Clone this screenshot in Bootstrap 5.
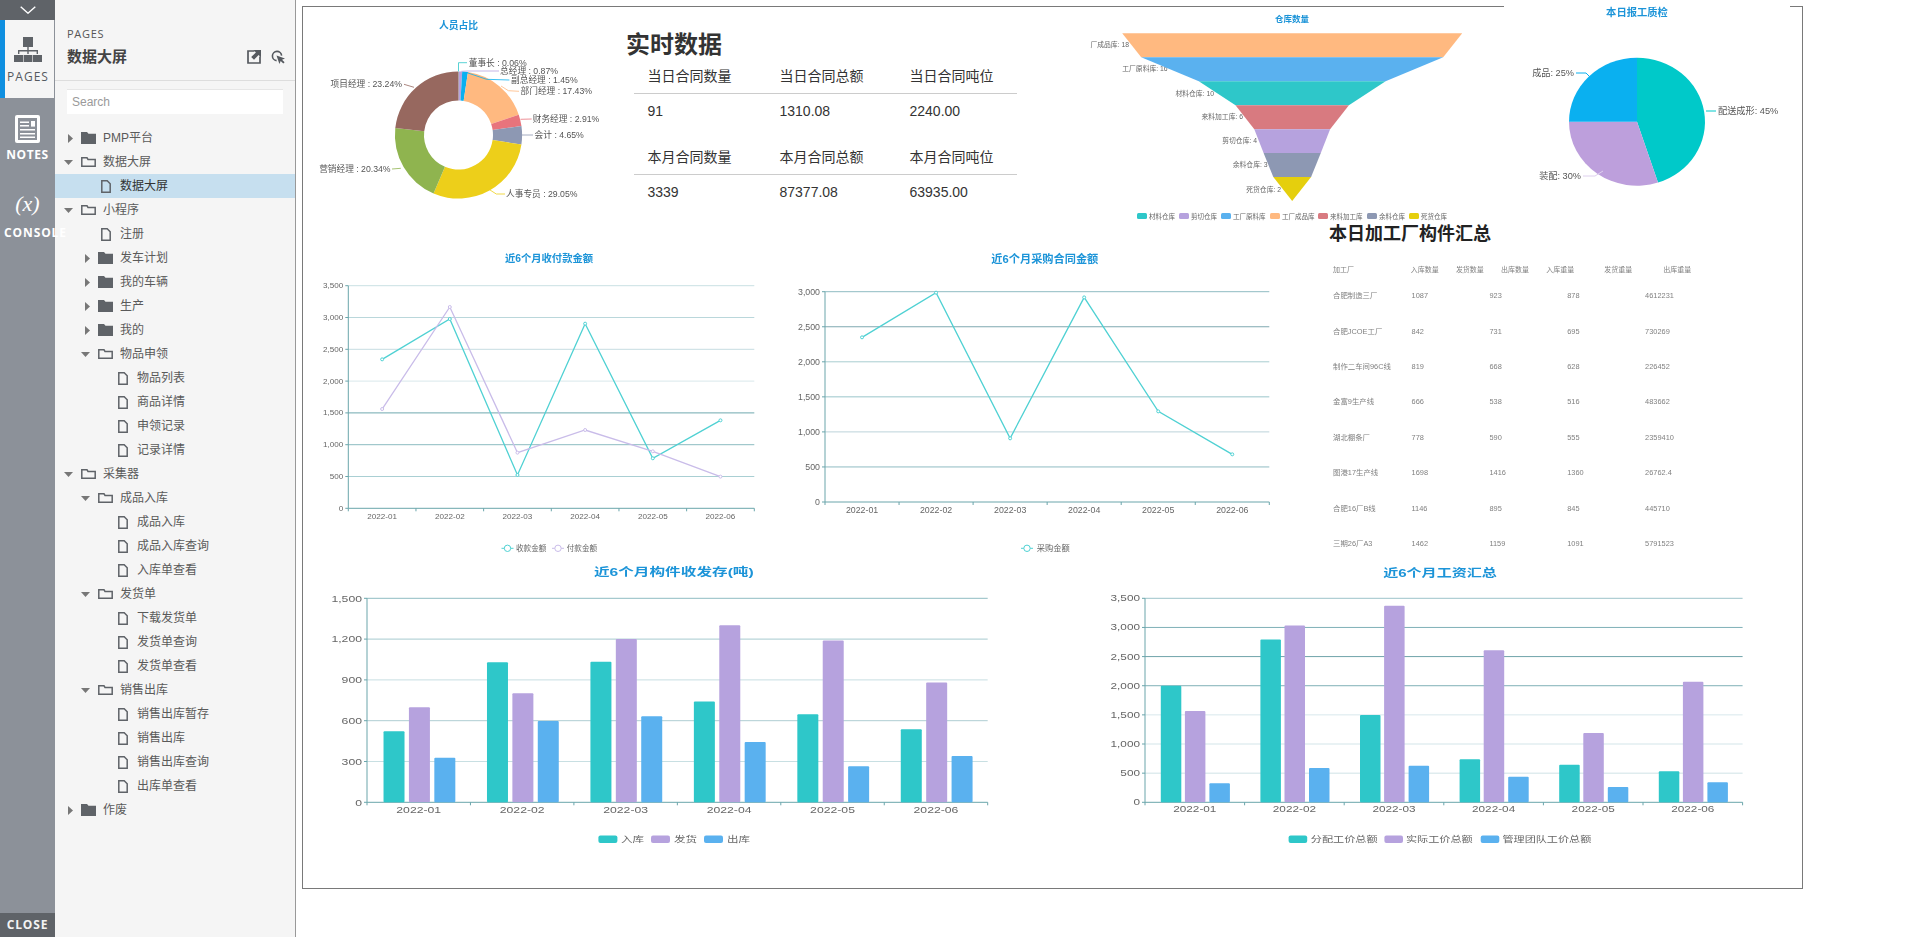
<!DOCTYPE html>
<html lang="en">
<head>
  <meta charset="UTF-8">
  <title>数据大屏</title>
  <meta name="viewport" content="width=device-width, initial-scale=1">
  <link href="https://cdn.jsdelivr.net/npm/bootstrap@5.3.0/dist/css/bootstrap.min.css" rel="stylesheet">
  <style>
    html, body { height: 100%; }
    body {
      background: #fff;
      overflow: hidden;
      font-family: "Liberation Sans", "Noto Sans CJK SC", sans-serif;
      color: #333;
    }
    svg { display: block; flex-shrink: 0; }

    /* left rail */
    .rail { width: 55px; height: 937px; background: #8c9199; flex-shrink: 0; position: relative; z-index: 2; }
    .rail-top { height: 20px; background: #5f6368; }
    .rail-tab { color: #fff; font-family: "Open Sans", sans-serif; font-weight: 700; font-size: 12px; letter-spacing: .6px; line-height: 16px; white-space: nowrap; text-align: center; }
    .tab-pages { height: 78px; padding-top: 17px; background: #f5f5f5; border-left: 5px solid #0f8fe0; border-right: 1px solid #8c9199; color: #55595f; font-weight: 400; letter-spacing: 1px; }
    .tab-pages svg { margin: 0 0 7px 9px; }
    .tab-pages div { margin-left: -3px; }
    .tab-notes { height: 78px; padding-top: 17px; }
    .tab-notes svg { margin: 0 auto 4px; }
    .tab-console { padding-top: 12px; }
    .tab-console .fx { font-family: "Liberation Serif", serif; font-style: italic; font-size: 22px; line-height: 32px; font-weight: 400; margin-bottom: 5px; letter-spacing: 0; }
    .tab-console .lbl { text-align: left; margin-left: 4px; letter-spacing: .9px; }
    .rail-close { height: 24px; line-height: 24px; background: #5f6368; color: #f3f3f3; font-family: "Open Sans", sans-serif; font-weight: 700; font-size: 12px; letter-spacing: .8px; }

    /* pages pane */
    .pane { width: 241px; height: 937px; background: #f5f5f5; border-right: 1px solid #999; flex-shrink: 0; }
    .pane-head { height: 81px; padding: 26px 10px 0 12px; border-bottom: 1px solid #ddd; }
    .pane-label { font-family: "Open Sans", sans-serif; font-size: 11px; line-height: 16px; letter-spacing: .7px; color: #555; }
    .pane-title { font-size: 15px; line-height: 20px; margin-top: 5px; color: #444; font-weight: 700; }
    .pane-tools { gap: 10px; }
    .pane-search { margin: 8px 12px 12px; }
    .pane-search .form-control { height: 25px; padding: 0 5px; font-size: 12px; border: 0; border-top: 1px solid #e6e6e6; border-radius: 0; background: #fff; box-shadow: none; }
    .pane-search .form-control::placeholder { color: #9a9a9a; }
    .tree-row { height: 24px; font-size: 12px; color: #5a5a5a; white-space: nowrap; }
    .tree-row.sel { background: #c6dfef; color: #333; }
    .twist { width: 17px; flex-shrink: 0; }
    .tree-icon { width: 15px; flex-shrink: 0; margin-right: 7px; }

    /* canvas */
    .stage { padding: 6px 0 0 6px; }
    .board { width: 1501px; height: 883px; border: 1px solid #797979; }
    .board-row { display: flex; align-items: flex-start; }
    .row-top { height: 217px; }
    .row-mid, .row-low { height: 332px; }
    .soft { filter: blur(.35px); }
    .pie-cover { background: #fff; margin-top: -7px; }
    svg text { font-family: "Liberation Sans", "Noto Sans CJK SC", sans-serif; }

    .live-box { width: 440px; padding-left: 6px; }
    .live-title { font-size: 24px; font-weight: 700; line-height: 30px; margin-top: 23px; color: #333; }
    .table.live-table { width: 383px; margin-left: 7.5px; table-layout: fixed; font-size: 14px; color: #333; }
    .table.live-table + .live-table { margin-top: 12px; }
    .table.live-table > * > * > * { padding: 0 0 0 14px; vertical-align: middle; font-weight: 400; background: transparent; box-shadow: none; }
    .table.live-table > thead > tr > th { height: 33px; border-bottom: 1px solid #ccc; }
    .table.live-table > tbody > tr > td { height: 36px; border: 0; }
    .live-table th:nth-child(1) { width: 132px; }
    .live-table th:nth-child(2) { width: 130px; }

    .factory-box { width: 502px; padding-top: 1px; }
    .factory-title { font-size: 18px; line-height: 18px; font-weight: 700; margin-left: 29px; color: #222; }
    .table.factory-table { margin: 0 0 0 33px; table-layout: fixed; font-size: 7px; color: #808080; }
    .table.factory-table > * > * > * { padding: 0; border: 0; vertical-align: middle; font-weight: 400; color: #808080; background: transparent; box-shadow: none; white-space: nowrap; }
    .table.factory-head { width: 390px; margin-top: 19px; }
    .table.factory-head > * > * > * { height: 16px; }
    .table.factory-body { width: 390px; font-size: 7.4px; }
    .table.factory-body > * > * > * { height: 35.43px; }
    .factory-head th:nth-child(1) { width: 77.7px; }
    .factory-head th:nth-child(2), .factory-head th:nth-child(3), .factory-head th:nth-child(4) { width: 45.2px; }
    .factory-head th:nth-child(5) { width: 58px; }
    .factory-head th:nth-child(6) { width: 59px; }
    .factory-body td { width: 76px; }
    .factory-body td:first-child { width: 76.7px; }
  </style>
</head>
<body>
  <div class="d-flex">
    <aside class="rail d-flex flex-column">
      <div class="rail-top d-flex align-items-center justify-content-center">
        <svg width="16" height="8" viewBox="0 0 16 8"><path d="M.7.7 8 7.2 15.3.7" fill="none" stroke="#fff" stroke-width="1.4"/></svg>
      </div>
      <div class="rail-tab tab-pages">
        <svg width="28" height="25" viewBox="0 0 28 25" fill="#5f6368">
          <rect x="9" y="0" width="10" height="10"/>
          <path d="M13.3 10h1.4v3H24v4h-1.4v-2.6H14.7V17h-1.4v-2.6H5.4V17H4v-4h9.3z"/>
          <rect x="0" y="18" width="9" height="7"/><rect x="9.6" y="18" width="8.8" height="7"/><rect x="19" y="18" width="9" height="7"/>
        </svg>
        <div>PAGES</div>
      </div>
      <div class="rail-tab tab-notes">
        <svg width="25" height="28" viewBox="0 0 25 28">
          <rect width="25" height="28" rx="2" fill="#fff"/>
          <rect x="3" y="3" width="19" height="22" fill="#8c9199"/>
          <path d="M5 6.5h9v1.6H5zM5 10h9v1.6H5zM5 14h15v1.6H5zM5 18h15v1.6H5zM5 21.5h15v1.4H5z" fill="#fff"/>
          <rect x="16" y="6" width="4" height="5.6" fill="#fff"/>
        </svg>
        <div>NOTES</div>
      </div>
      <div class="rail-tab tab-console">
        <div class="fx">(x)</div>
        <div class="lbl">CONSOLE</div>
      </div>
      <div class="rail-close mt-auto text-center">CLOSE</div>
    </aside>

    <section class="pane">
      <div class="pane-head">
        <div class="pane-label">PAGES</div>
        <div class="d-flex align-items-center justify-content-between">
          <div class="pane-title">数据大屏</div>
          <div class="d-flex pane-tools mt-1">
            <svg width="14" height="14" viewBox="0 0 14 14"><path d="M7.5 1H1v12h12V6.5" fill="none" stroke="#55595f" stroke-width="1.7"/><path d="M6.5 0H14v7.5l-2.4-2.4L7 9.8 4.2 7l4.7-4.6z" fill="#55595f"/></svg>
            <svg width="14" height="14" viewBox="0 0 14 14"><path d="M10.6 5.6A4.6 4.6 0 1 0 5.6 10.6" fill="none" stroke="#55595f" stroke-width="1.6"/><path d="M5.5 5.5 14 8.4l-3 1.3 2.6 2.6-1.3 1.3-2.6-2.6L8.4 14z" fill="#55595f"/></svg>
          </div>
        </div>
      </div>
      <div class="pane-search"><input class="form-control" type="text" placeholder="Search"></div>
      <div id="tree"></div>
    </section>

    <main class="stage">
      <div class="board">
        <div class="board-row row-top">
          <svg id="donut" class="soft" width="317" height="217" viewBox="303 7 317 217"></svg>
          <div class="live-box">
            <div class="live-title">实时数据</div>
            <table class="table mb-0 live-table">
              <thead><tr><th>当日合同数量</th><th>当日合同总额</th><th>当日合同吨位</th></tr></thead>
              <tbody><tr><td>91</td><td>1310.08</td><td>2240.00</td></tr></tbody>
            </table>
            <table class="table mb-0 live-table">
              <thead><tr><th>本月合同数量</th><th>本月合同总额</th><th>本月合同吨位</th></tr></thead>
              <tbody><tr><td>3339</td><td>87377.08</td><td>63935.00</td></tr></tbody>
            </table>
          </div>
          <svg id="funnel" class="soft" width="444" height="217" viewBox="1060 7 444 217"></svg>
          <svg id="pie" class="soft pie-cover" width="286" height="224" viewBox="1504 0 286 224"></svg>
        </div>

        <div class="board-row row-mid">
          <svg id="line1" class="soft" width="477" height="332" viewBox="303 224 477 332"></svg>
          <svg id="line2" class="soft" width="520" height="332" viewBox="780 224 520 332"></svg>
          <div class="factory-box">
            <div class="factory-title">本日加工厂构件汇总</div>
            <div class="soft">
              <table class="table mb-0 factory-table factory-head">
                <thead><tr><th>加工厂</th><th>入库数量</th><th>发货数量</th><th>出库数量</th><th>入库重量</th><th>发货重量</th><th>出库重量</th></tr></thead>
              </table>
              <table class="table mb-0 factory-table factory-body">
                <tbody>
                  <tr><td>合肥制造三厂</td><td>1087</td><td>923</td><td>878</td><td>4612231</td></tr>
                  <tr><td>合肥JCOE工厂</td><td>842</td><td>731</td><td>695</td><td>730269</td></tr>
                  <tr><td>制作二车间96C线</td><td>819</td><td>668</td><td>628</td><td>226452</td></tr>
                  <tr><td>金富9生产线</td><td>666</td><td>538</td><td>516</td><td>483662</td></tr>
                  <tr><td>湖北棚条厂</td><td>778</td><td>590</td><td>555</td><td>2359410</td></tr>
                  <tr><td>图港17生产线</td><td>1698</td><td>1416</td><td>1360</td><td>26762.4</td></tr>
                  <tr><td>合肥16厂B线</td><td>1146</td><td>895</td><td>845</td><td>445710</td></tr>
                  <tr><td>三期26厂A3</td><td>1462</td><td>1159</td><td>1091</td><td>5791523</td></tr>
                </tbody>
              </table>
            </div>
          </div>
        </div>

        <div class="board-row row-low">
          <svg id="bar1" class="soft" width="777" height="332" viewBox="303 556 777 332"></svg>
          <svg id="bar2" class="soft" width="722" height="332" viewBox="1080 556 722 332"></svg>
        </div>
      </div>
    </main>
  </div>

  <script src="https://cdn.jsdelivr.net/npm/bootstrap@5.3.0/dist/js/bootstrap.bundle.min.js"></script>
  <script>
    // sidebar tree: [level, kind, label], kind c = closed folder, o = open folder, p = page
    const pages = [
      [0,"c","PMP平台"],[0,"o","数据大屏"],[1,"p","数据大屏",true],[0,"o","小程序"],[1,"p","注册"],
      [1,"c","发车计划"],[1,"c","我的车辆"],[1,"c","生产"],[1,"c","我的"],[1,"o","物品申领"],
      [2,"p","物品列表"],[2,"p","商品详情"],[2,"p","申领记录"],[2,"p","记录详情"],[0,"o","采集器"],
      [1,"o","成品入库"],[2,"p","成品入库"],[2,"p","成品入库查询"],[2,"p","入库单查看"],[1,"o","发货单"],
      [2,"p","下载发货单"],[2,"p","发货单查询"],[2,"p","发货单查看"],[1,"o","销售出库"],[2,"p","销售出库暂存"],
      [2,"p","销售出库"],[2,"p","销售出库查询"],[2,"p","出库单查看"],[0,"c","作废"]
    ];
    const twists = {
      o: '<svg width="9" height="5" viewBox="0 0 9 5"><path d="M0 0h9L4.5 5z" fill="#777"/></svg>',
      c: '<svg class="ms-1" width="5" height="9" viewBox="0 0 5 9"><path d="M0 0l5 4.5L0 9z" fill="#777"/></svg>',
      p: ''
    };
    const icons = {
      c: '<svg width="15" height="12" viewBox="0 0 15 12"><path d="M0 0h6l1.5 1.8H15V12H0z" fill="#5f6368"/></svg>',
      o: '<svg width="15" height="10" viewBox="0 0 15 10"><path d="M.8.8H6l1 1.6h7.2v6.8H.8z" fill="none" stroke="#5f6368" stroke-width="1.5"/></svg>',
      p: '<svg class="ms-auto me-auto" width="10" height="13" viewBox="0 0 10 13"><path d="M.8.8h5.4l3 3v8.4H.8z" fill="none" stroke="#5f6368" stroke-width="1.5"/></svg>'
    };
    document.getElementById("tree").innerHTML = pages.map(([lvl, kind, label, sel]) =>
      `<div class="tree-row d-flex align-items-center ${sel ? "sel" : ""}" style="padding-left:${9 + lvl * 17}px">
        <span class="twist d-flex">${twists[kind]}</span><span class="tree-icon d-flex">${icons[kind]}</span><span>${label}</span>
      </div>`).join("");

    // chart helpers, every svg uses page coordinates in its viewBox
    const teal = "#2ec7c9", purple = "#b6a2de", blue = "#5ab1ef", titleBlue = "#1c94d8";

    function txt(x, y, str, o = {}) {
      const sx = o.sx || 1;
      return `<text transform="translate(${x} ${y}) scale(${sx} 1)" dominant-baseline="central" text-anchor="${o.anchor || "start"}" font-size="${o.size || 8}" font-weight="${o.weight || 400}" fill="${o.fill || "#666"}">${str}</text>`;
    }
    function title(x, y, str, size, sx) {
      return txt(x, y, str, { anchor: "middle", size, weight: 700, fill: titleBlue, sx });
    }
    function poly(pts, stroke, width = 1) {
      return `<polyline points="${pts.join(" ")}" fill="none" stroke="${stroke}" stroke-width="${width}"/>`;
    }

    function axes(c) {
      let s = "";
      const ticks = c.max / c.step, plotH = c.bottom - c.top, plotW = c.right - c.left;
      for (let i = 0; i <= ticks; i++) {
        const y = c.bottom - plotH * i / ticks, v = (c.step * i).toLocaleString("en-US");
        if (i > 0) s += `<line x1="${c.left}" x2="${c.right}" y1="${y}" y2="${y}" stroke="${c.grid[ticks - i]}"/>`;
        s += `<line x1="${c.left - 3}" x2="${c.left}" y1="${y}" y2="${y}" stroke="#6aa5ab"/>`;
        s += txt(c.left - 5, y, v, { anchor: "end", size: c.font, sx: c.sx });
      }
      s += `<line x1="${c.left}" x2="${c.left}" y1="${c.top}" y2="${c.bottom}" stroke="#6aa5ab"/>`;
      s += `<line x1="${c.left}" x2="${c.right}" y1="${c.bottom}" y2="${c.bottom}" stroke="#6aa5ab"/>`;
      for (let i = 0; i <= 6; i++) {
        const x = c.left + plotW * i / 6;
        s += `<line x1="${x}" x2="${x}" y1="${c.bottom}" y2="${c.bottom + 3}" stroke="#6aa5ab"/>`;
        if (i < 6) s += txt(x + plotW / 12, c.bottom + c.labelGap, "2022-0" + (i + 1), { anchor: "middle", size: c.font, sx: c.sx });
      }
      return s;
    }

    function lineChart(id, c) {
      let s = title(c.titleX, c.titleY, c.title, c.titleSize) + axes(c);
      const plotW = c.right - c.left, plotH = c.bottom - c.top;
      c.series.forEach(d => {
        const pts = d.data.map((v, i) => [c.left + plotW * (i + .5) / 6, c.bottom - plotH * v / c.max]);
        s += poly(pts.map(p => p.join(",")), d.color, 1.3);
        pts.forEach(p => s += `<circle cx="${p[0]}" cy="${p[1]}" r="1.5" fill="#fff" stroke="${d.color}"/>`);
        s += `<line x1="${d.lx}" x2="${d.lx + 12}" y1="${c.legendY}" y2="${c.legendY}" stroke="${d.color}"/>`;
        s += `<circle cx="${d.lx + 6}" cy="${c.legendY}" r="3.2" fill="#fff" stroke="${d.color}"/>`;
        s += txt(d.tx, c.legendY, d.name, { size: c.legendFont });
      });
      document.getElementById(id).innerHTML = s;
    }

    function barChart(id, c) {
      let s = title(c.titleX, c.titleY, c.title, 11.5, c.titleSx) + axes(c);
      const plotW = c.right - c.left, plotH = c.bottom - c.top;
      c.series.forEach(d => {
        d.data.forEach((v, i) => {
          const h = plotH * v / c.max, x = c.left + plotW * (i + .5) / 6 + d.off;
          s += `<rect x="${x}" y="${c.bottom - h}" width="${c.barW}" height="${h}" rx="1" fill="${d.color}"/>`;
        });
        s += `<rect x="${d.sx}" y="${c.legendY - 3.8}" width="${c.swW}" height="7.6" rx="2" fill="${d.color}"/>`;
        s += txt(d.tx, c.legendY, d.name, { size: 8.5, sx: c.sx });
      });
      document.getElementById(id).innerHTML = s;
    }

    // 人员占比
    function slicePath(cx, cy, rx, ry, r0x, r0y, a0, a1) {
      const pt = (a, x, y) => [cx + x * Math.sin(a), cy - y * Math.cos(a)];
      const big = a1 - a0 > Math.PI ? 1 : 0;
      const [x1, y1] = pt(a0, rx, ry), [x2, y2] = pt(a1, rx, ry);
      if (!r0x) return `M${cx} ${cy}L${x1} ${y1}A${rx} ${ry} 0 ${big} 1 ${x2} ${y2}Z`;
      const [x3, y3] = pt(a1, r0x, r0y), [x4, y4] = pt(a0, r0x, r0y);
      return `M${x1} ${y1}A${rx} ${ry} 0 ${big} 1 ${x2} ${y2}L${x3} ${y3}A${r0x} ${r0y} 0 ${big} 0 ${x4} ${y4}Z`;
    }
    function slices(list, cx, cy, rx, ry, r0x, r0y) {
      let a = 0, s = "";
      list.forEach(d => {
        const b = a + d.pct / 100 * Math.PI * 2;
        s += `<path d="${slicePath(cx, cy, rx, ry, r0x, r0y, a, b)}" fill="${d.color}"/>`;
        a = b;
      });
      return s;
    }
    const people = [
      { pct: .06, color: teal, name: "董事长 : 0.06%", x: 468.7, y: 62.7, lead: ["458.5,71.3", "458.5,62.7", "467,62.7"] },
      { pct: .87, color: purple, name: "总经理 : 0.87%", x: 500, y: 71, lead: ["461.4,71.3", "467,71", "499,71"] },
      { pct: 1.45, color: "#0ab0f0", name: "副总经理 : 1.45%", x: 511, y: 80, lead: ["467,72.7", "486.6,79.3", "509.4,80"] },
      { pct: 17.43, color: "#ffb980", name: "部门经理 : 17.43%", x: 520.5, y: 91, lead: ["501,86", "508.4,90.7", "519,91.3"] },
      { pct: 2.91, color: "#e8747c", name: "财务经理 : 2.91%", x: 532.7, y: 119, lead: ["520.5,119.3", "531.7,119"] },
      { pct: 4.65, color: "#8d98b3", name: "会计 : 4.65%", x: 534.6, y: 135, lead: ["522,135", "533,135"] },
      { pct: 29.05, color: "#edcf1a", name: "人事专员 : 29.05%", x: 506, y: 194, lead: ["490,190", "496.3,194", "505,194"] },
      { pct: 20.34, color: "#8fb44f", name: "营销经理 : 20.34%", x: 390.6, y: 168.7, end: true, lead: ["400.8,168.3", "392,169"] },
      { pct: 23.24, color: "#97685f", name: "项目经理 : 23.24%", x: 402, y: 84, end: true, lead: ["414,87.3", "404,84.3"] }
    ];
    document.getElementById("donut").innerHTML =
      title(458.5, 25.5, "人员占比", 9.8) + slices(people, 458.5, 135, 63.6, 63.6, 34.5, 34.5) +
      people.map(d => poly(d.lead, d.color, .8) + txt(d.x, d.y, d.name, { size: 8.7, fill: "#555", anchor: d.end ? "end" : "start" })).join("");

    // 仓库数量
    const fCx = 1292.2;
    const fRows = [
      { y0: 33.3, y1: 57.3, w0: 170, w1: 151, color: "#ffb980", name: "厂成品库: 18", ex: 1129, ly: 44.7 },
      { y0: 57.3, y1: 81.3, w0: 151, w1: 93.4, color: blue, name: "工厂原料库: 16", ex: 1167.6, ly: 68.7 },
      { y0: 81.3, y1: 105.3, w0: 93.4, w1: 56.7, color: teal, name: "材料仓库: 10", ex: 1214, ly: 93 },
      { y0: 105.3, y1: 129.3, w0: 56.7, w1: 37.9, color: "#d87a80", name: "来料加工库: 6", ex: 1243, ly: 116.7 },
      { y0: 129.3, y1: 153, w0: 37.9, w1: 28.6, color: purple, name: "剪切仓库: 4", ex: 1257, ly: 140.7 },
      { y0: 153, y1: 177, w0: 28.6, w1: 18.9, color: "#8d98b3", name: "余料仓库: 3", ex: 1267.5, ly: 164.7 },
      { y0: 177, y1: 201, w0: 18.9, w1: 0, color: "#e5cf0d", name: "死货仓库: 2", ex: 1281, ly: 189 }
    ];
    const fLegend = [
      [1137, "材料仓库", teal], [1179, "剪切仓库", purple], [1221, "工厂原料库", blue], [1270, "工厂成品库", "#ffb980"],
      [1318, "来料加工库", "#d87a80"], [1367, "余料仓库", "#8d98b3"], [1409, "死货仓库", "#e5cf0d"]
    ];
    document.getElementById("funnel").innerHTML =
      title(1292, 19, "仓库数量", 8.5) +
      fRows.map(r => txt(r.ex, r.ly, r.name, { size: 6.8, anchor: "end", fill: "#666" }) +
        `<polygon points="${fCx - r.w0},${r.y0} ${fCx + r.w0},${r.y0} ${fCx + r.w1},${r.y1} ${fCx - r.w1},${r.y1}" fill="${r.color}"/>`).join("") +
      fLegend.map(([x, name, color]) => `<rect x="${x}" y="213" width="10" height="6" rx="1.5" fill="${color}"/>` + txt(x + 12, 216, name, { size: 6.5 })).join("");

    // 本日报工质检
    const quality = [
      { pct: 45, color: "#00c9c9" }, { pct: 30, color: "#bd9fdc" }, { pct: 25, color: "#0ab0f0" }
    ];
    document.getElementById("pie").innerHTML =
      title(1637, 12.3, "本日报工质检", 10.3) + slices(quality, 1637, 121.7, 68, 64) +
      poly(["1706,111", "1716,111"], "#00c9c9") + poly(["1576,73", "1586,73", "1591,78"], "#0ab0f0") + poly(["1583,176", "1595,176", "1603,171"], "#ded0ee") +
      txt(1718, 111, "配送成形: 45%", { size: 9.2, fill: "#555" }) + txt(1574, 73, "成品: 25%", { size: 9.2, anchor: "end", fill: "#555" }) + txt(1581, 175.7, "装配: 30%", { size: 9.2, anchor: "end", fill: "#555" });

    lineChart("line1", {
      title: "近6个月收付款金额", titleX: 549, titleY: 258.3, titleSize: 10.3,
      left: 348.3, right: 754.3, top: 285.7, bottom: 508.3, max: 3500, step: 500, font: 8.1, labelGap: 8, legendY: 548.3, legendFont: 7.6,
      grid: ["#c9e0e3", "#bad7db", "#c6dde1", "#d9e8eb", "#6ea8ae", "#8cbcc1", "#a9cfd3"],
      series: [
        { name: "收款金额", color: "#4fd1d3", lx: 501.5, tx: 516, data: [2342, 2976, 524, 2903, 786, 1383] },
        { name: "付款金额", color: "#c9bce9", lx: 552, tx: 566.7, data: [1561, 3165, 875, 1231, 896, 498] }
      ]
    });
    lineChart("line2", {
      title: "近6个月采购合同金额", titleX: 1044.8, titleY: 259.3, titleSize: 11.2,
      left: 825, right: 1269.3, top: 291.7, bottom: 502, max: 3000, step: 500, font: 8.8, labelGap: 8, legendY: 548.3, legendFont: 8.3,
      grid: ["#8fbcc2", "#7fa9b0", "#a9cdd1", "#99c5ca", "#bcd3da", "#8fbcc2"],
      series: [{ name: "采购金额", color: "#4fd1d3", lx: 1021, tx: 1036.7, data: [2349, 2986, 908, 2919, 1293, 680] }]
    });
    barChart("bar1", {
      title: "近6个月构件收发存(吨)", titleX: 673.8, titleY: 572.7, titleSx: 1.36,
      left: 367, right: 987.7, top: 598.3, bottom: 802.3, max: 1500, step: 300, font: 9, sx: 1.36, labelGap: 7, legendY: 839.3, barW: 21, swW: 19,
      grid: ["#8fbcc2", "#a6cacf", "#c8dfe2", "#aecdd2", "#c8dfe2"],
      series: [
        { name: "入库", color: teal, off: -35.2, sx: 598.4, tx: 621, data: [522, 1029, 1034, 742, 647, 537] },
        { name: "发货", color: purple, off: -9.8, sx: 651, tx: 674, data: [698, 801, 1201, 1301, 1189, 880] },
        { name: "出库", color: blue, off: 15.6, sx: 704, tx: 727, data: [328, 598, 632, 444, 265, 340] }
      ]
    });
    barChart("bar2", {
      title: "近6个月工资汇总", titleX: 1440, titleY: 572.7, titleSx: 1.31,
      left: 1145, right: 1742.6, top: 598.3, bottom: 802.3, max: 3500, step: 500, font: 9, sx: 1.31, labelGap: 7, legendY: 839.3, barW: 20.5, swW: 18.6,
      grid: ["#9dc4ca", "#7fb0b7", "#6fa3aa", "#7fb0b7", "#d8e8ec", "#d3e5e9", "#cfe2e6"],
      series: [
        { name: "分配工价总额", color: teal, off: -34, sx: 1288.6, tx: 1310.8, data: [2000, 2795, 1498, 737, 646, 532] },
        { name: "实际工价总额", color: purple, off: -9.9, sx: 1384.4, tx: 1406, data: [1566, 3032, 3374, 2607, 1188, 2070] },
        { name: "管理团队工价总额", color: blue, off: 14.6, sx: 1480.7, tx: 1502.4, data: [326, 589, 629, 440, 263, 343] }
      ]
    });
  </script>
</body>
</html>
